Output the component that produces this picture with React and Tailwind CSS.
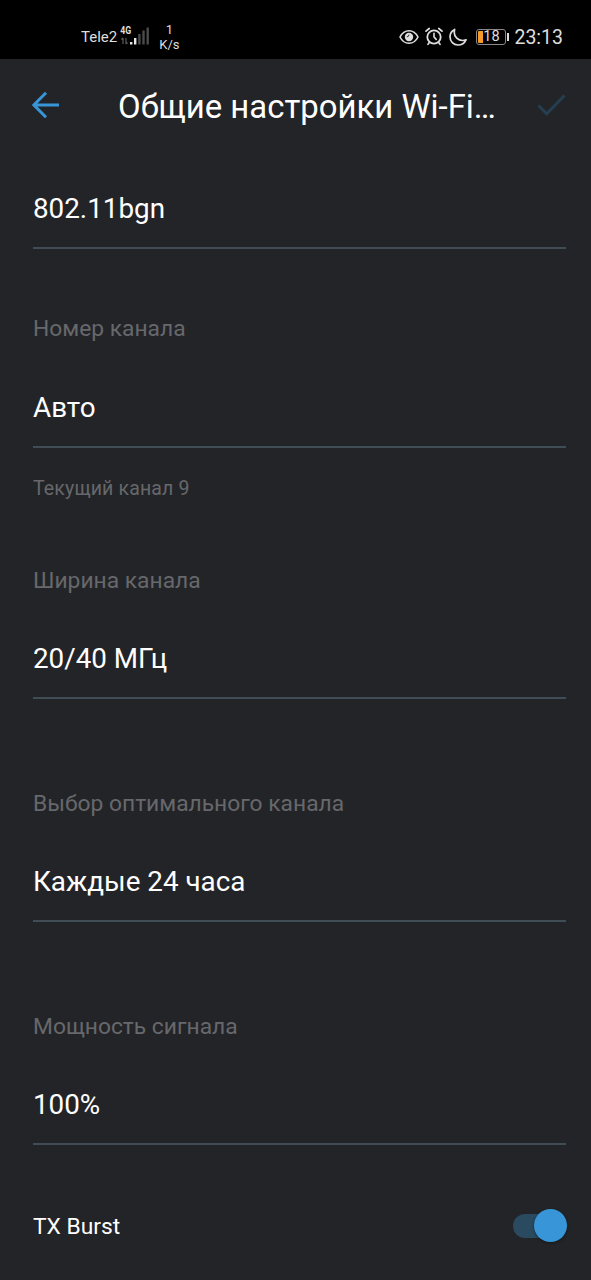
import React, { useState } from "react";

/* ---------- STATUS BAR ---------- */

function SignalIcon() {
   return (
      <svg width="33" height="30" viewBox="-1 -4 33 30" className="ml-[2px] mt-[-2px]">
         <text
            x="0.3"
            y="9"
            fontSize="11"
            fontWeight="700"
            fill="#dedede"
            textLength="11"
            lengthAdjust="spacingAndGlyphs"
            fontFamily="Roboto, sans-serif"
         >
            4G
         </text>
         <path d="M3 13v6M1.5 14.5L3 13M6 13v6M6 19l1.5-1.5" stroke="#5a5a5a" strokeWidth="1.2" fill="none" />
         <rect x="10" y="17" width="2.4" height="2.5" fill="#e8e8e8" />
         <rect x="14" y="13" width="2.4" height="6.5" fill="#e8e8e8" />
         <rect x="18.2" y="9" width="2.4" height="10.5" fill="#4b4b4b" />
         <rect x="22.3" y="5.5" width="2.4" height="14" fill="#4b4b4b" />
         <rect x="26.5" y="2.5" width="2.4" height="17" fill="#4b4b4b" />
      </svg>
   );
}

function EyeIcon() {
   return (
      <svg width="20" height="16" viewBox="0 0 20 16" fill="none">
         <path
            d="M1 8C3 4 6.2 1.7 10 1.7s7 2.3 9 6.3c-2 4-5.2 6.3-9 6.3S3 12 1 8z"
            stroke="#dedede"
            strokeWidth="1.6"
         />
         <circle cx="10" cy="8" r="4.2" fill="#dedede" />
         <path d="M10 5.6A2.2 2.2 0 0 1 7.8 7.8" stroke="#333" strokeWidth="1" />
      </svg>
   );
}

function AlarmIcon() {
   return (
      <svg width="18" height="19" viewBox="0 0 18 19" fill="none" stroke="#dedede" strokeLinecap="round">
         <circle cx="9" cy="10" r="6.7" strokeWidth="1.8" />
         <path d="M9 6.3V10l2.2 2.4" strokeWidth="1.6" />
         <path d="M1 4.2L4.2 1.5M17 4.2l-3.2-2.7M4.3 15.6L3 17.3M13.7 15.6l1.3 1.7" strokeWidth="1.7" />
      </svg>
   );
}

function MoonIcon() {
   return (
      <svg width="18" height="18" viewBox="0 0 18 18" fill="none">
         <path
            d="M5.6 1.4C2.7 2.8 1 5.6 1 8.8 1 13.4 4.5 17 9 17c3.3 0 6.5-1.9 8-5.2-1.1.5-2.2.7-3.4.7C9 12.5 5.3 9 5.3 4.8c0-1.2.1-2.3.3-3.4z"
            stroke="#dedede"
            strokeWidth="1.7"
            strokeLinejoin="round"
         />
      </svg>
   );
}

function Battery({ level }) {
   return (
      <div className="flex items-center">
         <div className="relative w-[30px] h-4 rounded-[3px] border border-[#8a8a8a] p-px">
            <div className="h-full w-[5px] bg-[#f79a2b] rounded-l-[1px]" />
            <span className="absolute inset-0 flex items-center justify-center pt-[2px] text-[14.5px] leading-none text-[#dedede]">
               {level}
            </span>
         </div>
         <div className="ml-px w-[2px] h-2 bg-[#dedede]" />
      </div>
   );
}

function StatusBar() {
   return (
      <div className="h-[59px] bg-black flex items-center justify-between pl-[81px] pr-7 pt-[14px] text-[#dedede]">
         <div className="flex items-center pt-px">
            <span className="text-[15px] leading-4">Tele2</span>
            <SignalIcon />
            <div className="ml-[7px] flex flex-col items-center text-[13px] leading-[15px]">
               <span>1</span>
               <span>K/s</span>
            </div>
         </div>
         <div className="flex items-center">
            <EyeIcon />
            <div className="ml-[6px]">
               <AlarmIcon />
            </div>
            <div className="ml-[6px]">
               <MoonIcon />
            </div>
            <div className="ml-[9px]">
               <Battery level={18} />
            </div>
            <span className="ml-[5px] pt-[2px] text-[19.5px] leading-5">23:13</span>
         </div>
      </div>
   );
}

/* ---------- SETTINGS ---------- */

function Header() {
   return (
      <header className="h-[94px] flex items-center pl-8 pr-[25px]">
         <button className="-mt-[3px]">
            <svg width="27" height="28" viewBox="0 0 27 28" fill="none" stroke="#3896d8" strokeWidth="3">
               <path d="M14 1.8L1.9 14 14 26.2M2 14h25" />
            </svg>
         </button>
         <h1 className="ml-[59px] pt-[2px] flex-1 text-[32.9px] leading-10 text-white whitespace-nowrap">
            Общие настройки Wi-Fi…
         </h1>
         <button className="-mt-[2px]">
            <svg width="29" height="22" viewBox="0 0 29 22" fill="none" stroke="#243f50" strokeWidth="3">
               <path d="M1.5 11.5L9.7 19.8 27.5 1.5" />
            </svg>
         </button>
      </header>
   );
}

function Value({ children }) {
   return (
      <div className="h-14 border-b-2 border-[#404c56] text-[27.8px] leading-8 text-white">
         {children}
      </div>
   );
}

function Field({ label, value, hint }) {
   return (
      <div>
         <div className="mb-[48.6px] text-[22.8px] leading-7 text-[#67686b]">{label}</div>
         <Value>{value}</Value>
         {hint && (
            <div className="mt-[29px] text-[19.5px] leading-6 tracking-[0.15px] text-[#67686b]">
               {hint}
            </div>
         )}
      </div>
   );
}

function Toggle({ checked, onChange }) {
   return (
      <button
         role="switch"
         aria-checked={checked}
         onClick={() => onChange(!checked)}
         className="-mr-px w-[54px] h-[33px] flex items-center"
      >
         <span
            className={`w-full h-6 rounded-full flex items-center ${
               checked ? "bg-[#2a4a60] justify-end" : "bg-[#3c3d40] justify-start"
            }`}
         >
            <span className="w-[33px] h-[33px] shrink-0 rounded-full bg-[#3896d8] shadow-[0_1px_3px_rgba(0,0,0,0.4)]" />
         </span>
      </button>
   );
}

export default function App() {
   const [txBurst, setTxBurst] = useState(true);

   return (
      <div className="w-full h-[1280px] overflow-hidden bg-[#232428] font-[Roboto,sans-serif]">
         <StatusBar />
         <Header />
         <main className="pl-[33px] pr-[25px] pt-10">
            <Value>802.11bgn</Value>
            <div className="mt-[66px]">
               <Field label="Номер канала" value="Авто" hint="Текущий канал 9" />
            </div>
            <div className="mt-[66px] flex flex-col gap-[90.4px]">
               <Field label="Ширина канала" value="20/40 МГц" />
               <Field label="Выбор оптимального канала" value="Каждые 24 часа" />
               <Field label="Мощность сигнала" value="100%" />
            </div>
            <div className="mt-16 flex items-center justify-between">
               <span className="pt-[3px] text-[22.8px] leading-7 text-white">TX Burst</span>
               <Toggle checked={txBurst} onChange={setTxBurst} />
            </div>
         </main>
      </div>
   );
}
